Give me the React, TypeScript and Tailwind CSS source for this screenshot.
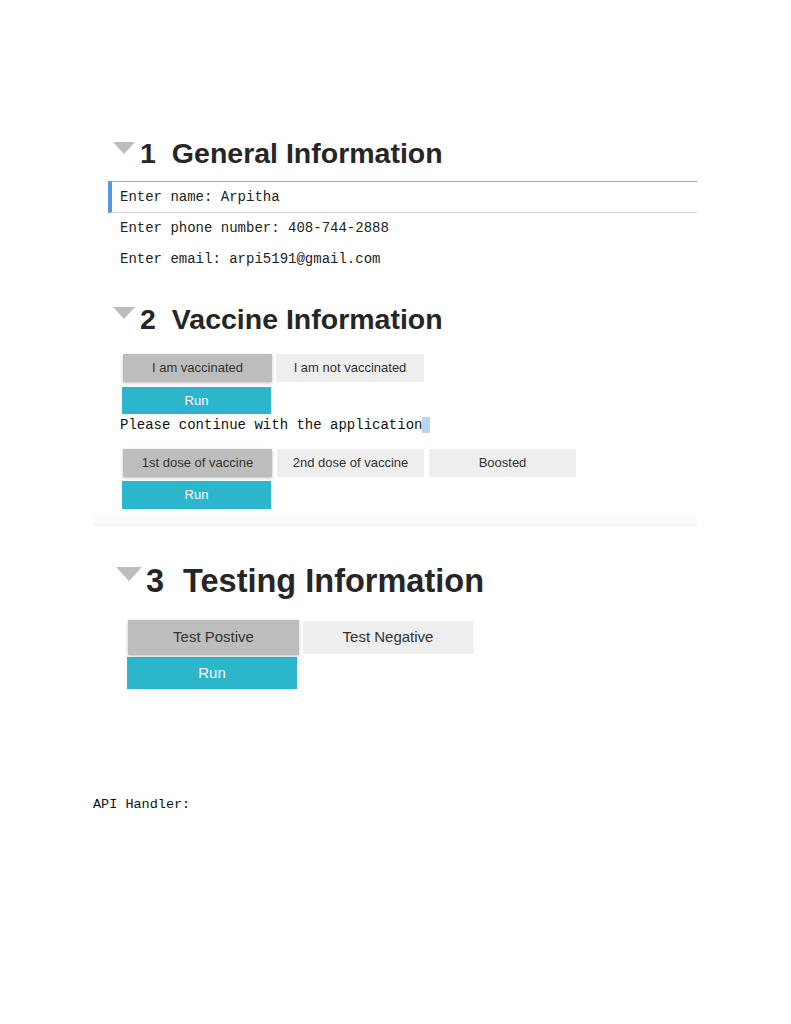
import React from "react";

const sans = { fontFamily: '"Liberation Sans", Arial, sans-serif' } as const;
const mono = { fontFamily: '"Liberation Mono", "Courier New", monospace' } as const;

function Tri({ w, h }: { w: number; h: number }) {
  return (
    <svg width={w} height={h} viewBox={`0 0 ${w} ${h}`} className="block">
      <polygon points={`0,0 ${w},0 ${w / 2},${h}`} fill="#bdbdbd" />
    </svg>
  );
}

export default function App() {
  return (
    <div className="w-[791px] h-[1024px] bg-white flex flex-col" style={sans}>
      {/* Section 1 */}
      <div className="mt-[138px] h-[30px] flex items-center pl-[113px]">
        <div className="self-start mt-[4px]">
          <Tri w={22} h={12} />
        </div>
        <div className="ml-[5px] text-[28.5px] font-bold text-[#262626] leading-none">
          1<span className="ml-[16px]">General Information</span>
        </div>
      </div>
      <div className="mt-[13px] ml-[108px] w-[589px] h-[32px] border-l-4 border-l-[#4f9ad8] border-t border-t-[#aaaaaa] border-b border-b-[#d2d2d2] flex items-center pl-[8px] text-[14px] text-[#222]" style={mono}>
        Enter name: Arpitha
      </div>
      <div className="ml-[120px] h-[31px] flex items-center text-[14px] text-[#222]" style={mono}>
        Enter phone number: 408-744-2888
      </div>
      <div className="ml-[120px] h-[31px] flex items-center text-[14px] text-[#222]" style={mono}>
        Enter email: arpi5191@gmail.com
      </div>

      {/* Section 2 */}
      <div className="mt-[29px] h-[30px] flex items-center pl-[113px]">
        <div className="self-start mt-[3px]">
          <Tri w={22} h={12} />
        </div>
        <div className="ml-[5px] text-[28.5px] font-bold text-[#262626] leading-none">
          2<span className="ml-[16px]">Vaccine Information</span>
        </div>
      </div>
      <div className="mt-[20px] ml-[123px] flex gap-[4px] text-[13px] text-[#333]">
        <div className="w-[149px] h-[28px] bg-[#bdbdbd] shadow-[0_1px_3px_rgba(0,0,0,0.25)] flex items-center justify-center">I am vaccinated</div>
        <div className="w-[148px] h-[28px] bg-[#eeeeee] flex items-center justify-center">I am not vaccinated</div>
      </div>
      <div className="mt-[5px] ml-[122px] w-[149px] h-[27px] bg-[#2bb6cc] text-white text-[13px] flex items-center justify-center">Run</div>
      <div className="mt-[3px] ml-[120px] h-[16px] flex items-center text-[14px] text-[#111]" style={mono}>
        <span className="mt-[1px]">Please continue with the application</span>
        <span className="inline-block w-[8px] h-[16px] bg-[#b6d5f2]" />
      </div>
      <div className="mt-[16px] ml-[123px] flex gap-[5px] text-[13px] text-[#333]">
        <div className="w-[149px] h-[28px] bg-[#bdbdbd] shadow-[0_1px_3px_rgba(0,0,0,0.25)] flex items-center justify-center">1st dose of vaccine</div>
        <div className="w-[147px] h-[28px] bg-[#eeeeee] flex items-center justify-center">2nd dose of vaccine</div>
        <div className="w-[147px] h-[28px] bg-[#eeeeee] flex items-center justify-center">Boosted</div>
      </div>
      <div className="mt-[4px] ml-[122px] w-[149px] h-[28px] bg-[#2bb6cc] text-white text-[13px] flex items-center justify-center">Run</div>
      <div className="mt-[1px] ml-[93px] w-[604px] h-[17px] bg-gradient-to-b from-[#ffffff] to-[#f7f7f7]" />

      {/* Section 3 */}
      <div className="mt-[38px] h-[32px] flex items-center pl-[116px]">
        <div className="self-start mt-[2px]">
          <Tri w={26} h={14} />
        </div>
        <div className="ml-[4px] text-[32.5px] font-bold text-[#262626] leading-none">
          3<span className="ml-[19px]">Testing Information</span>
        </div>
      </div>
      <div className="mt-[23px] ml-[128px] flex gap-[4px] text-[15px] text-[#333]">
        <div className="w-[171px] h-[35px] bg-[#bdbdbd] shadow-[0_1px_3px_rgba(0,0,0,0.25)] flex items-center justify-center">Test Postive</div>
        <div className="w-[170px] h-[33px] mt-[1px] bg-[#eeeeee] flex items-center justify-center">Test Negative</div>
      </div>
      <div className="mt-[2px] ml-[127px] w-[170px] h-[32px] bg-[#2bb6cc] text-white text-[15px] flex items-center justify-center">Run</div>

      <div className="mt-[109px] ml-[93px] text-[13.5px] text-[#111] leading-none" style={mono}>
        API Handler:
      </div>
    </div>
  );
}
